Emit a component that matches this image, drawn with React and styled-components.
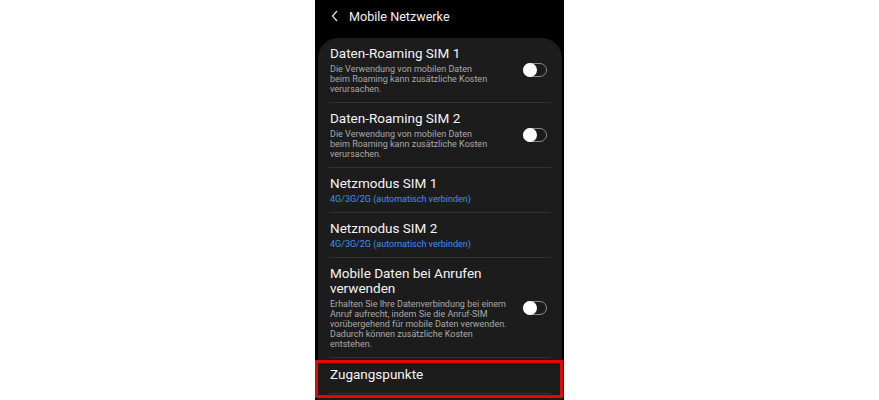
import React from 'react';
import styled, { createGlobalStyle } from 'styled-components';

const GlobalStyle = createGlobalStyle`
  html, body {
    margin: 0;
    padding: 0;
    background: #ffffff;
  }
  body {
    font-family: Roboto, "Noto Sans", sans-serif;
  }
`;

const roamingText = [
  'Die Verwendung von mobilen Daten',
  'beim Roaming kann zusätzliche Kosten',
  'verursachen.',
];

const settings = [
  { title: 'Daten-Roaming SIM 1', desc: roamingText, toggle: true },
  { title: 'Daten-Roaming SIM 2', desc: roamingText, toggle: true },
  { title: 'Netzmodus SIM 1', value: '4G/3G/2G (automatisch verbinden)' },
  { title: 'Netzmodus SIM 2', value: '4G/3G/2G (automatisch verbinden)' },
  {
    title: 'Mobile Daten bei Anrufen verwenden',
    desc: [
      'Erhalten Sie Ihre Datenverbindung bei einem',
      'Anruf aufrecht, indem Sie die Anruf-SIM',
      'vorübergehend für mobile Daten verwenden.',
      'Dadurch können zusätzliche Kosten',
      'entstehen.',
    ],
    toggle: true,
  },
  { title: 'Zugangspunkte', marked: true },
];

const App = () => (
  <>
    <GlobalStyle />
    <Page>
      <Phone>
        <Header>
          <BackIcon width="8" height="12" viewBox="0 0 8 12">
            <path d="M6 1 L1.5 6 L6 11" fill="none" stroke="#e8e8e8" strokeWidth="1.2" />
          </BackIcon>
          <HeaderTitle>Mobile Netzwerke</HeaderTitle>
        </Header>
        <Card>
          {settings.map(item => (
            <Row key={item.title} variant={item.desc ? 'desc' : item.value ? 'value' : 'single'}>
              <TextCol>
                <Title>{item.title}</Title>
                {item.desc && (
                  <Desc>
                    {item.desc.map(line => (
                      <Line key={line}>{line}</Line>
                    ))}
                  </Desc>
                )}
                {item.value && <Value>{item.value}</Value>}
              </TextCol>
              {item.toggle && (
                <Toggle>
                  <Knob />
                </Toggle>
              )}
              {item.marked && <Marker />}
            </Row>
          ))}
        </Card>
      </Phone>
    </Page>
  </>
);

export default App;

const Page = styled.div`
  width: 879px;
  height: 400px;
  display: flex;
  justify-content: center;
  overflow: hidden;
`;

const Phone = styled.div`
  width: 249px;
  height: 400px;
  background: #000;
  display: flex;
  flex-direction: column;
  padding: 0 2px 0 3px;
  box-sizing: border-box;
`;

const Header = styled.div`
  height: 38px;
  flex-shrink: 0;
  display: flex;
  align-items: center;
  padding-left: 13px;
  gap: 10px;
`;

const BackIcon = styled.svg`
  display: block;
  margin-top: -6px;
`;

const HeaderTitle = styled.div`
  color: #f2f2f2;
  font-size: 12.6px;
  margin-top: -6px;
`;

const Card = styled.div`
  background: #1c1c1c;
  border-radius: 20px 20px 0 0;
  flex: 1;
  display: flex;
  flex-direction: column;
  padding: 0 11px;
`;

const rowPadding = {
  desc: '8px 0 8px',
  value: '8px 0 8px',
  single: '9px 0 8px',
};

const Row = styled.div`
  position: relative;
  display: flex;
  align-items: center;
  justify-content: space-between;
  padding: ${({ variant }) => rowPadding[variant]};
  border-bottom: 1px solid #323232;
`;

const TextCol = styled.div`
  display: flex;
  flex-direction: column;
  padding-left: 1px;
  max-width: 182px;
`;

const Title = styled.div`
  color: #f4f4f4;
  font-size: 13.5px;
  line-height: 15px;
  margin-bottom: 3px;
`;

const Desc = styled.div`
  color: #a9a9a9;
  font-size: 9px;
  line-height: 10px;
`;

const Line = styled.div`
  white-space: nowrap;
`;

const Value = styled.div`
  color: #3d8ef5;
  font-size: 9px;
  line-height: 10px;
`;

const Toggle = styled.div`
  width: 22px;
  height: 12px;
  border: 1px solid #8a8a8a;
  border-radius: 8px;
  margin-right: 4px;
  position: relative;
  flex-shrink: 0;
`;

const Knob = styled.div`
  position: absolute;
  left: -1px;
  top: -1px;
  width: 14px;
  height: 14px;
  border-radius: 50%;
  background: #fff;
`;

const Marker = styled.div`
  position: absolute;
  left: -14px;
  right: -12px;
  top: 2px;
  bottom: -5px;
  border: 3px solid #e0080f;
  pointer-events: none;
`;
